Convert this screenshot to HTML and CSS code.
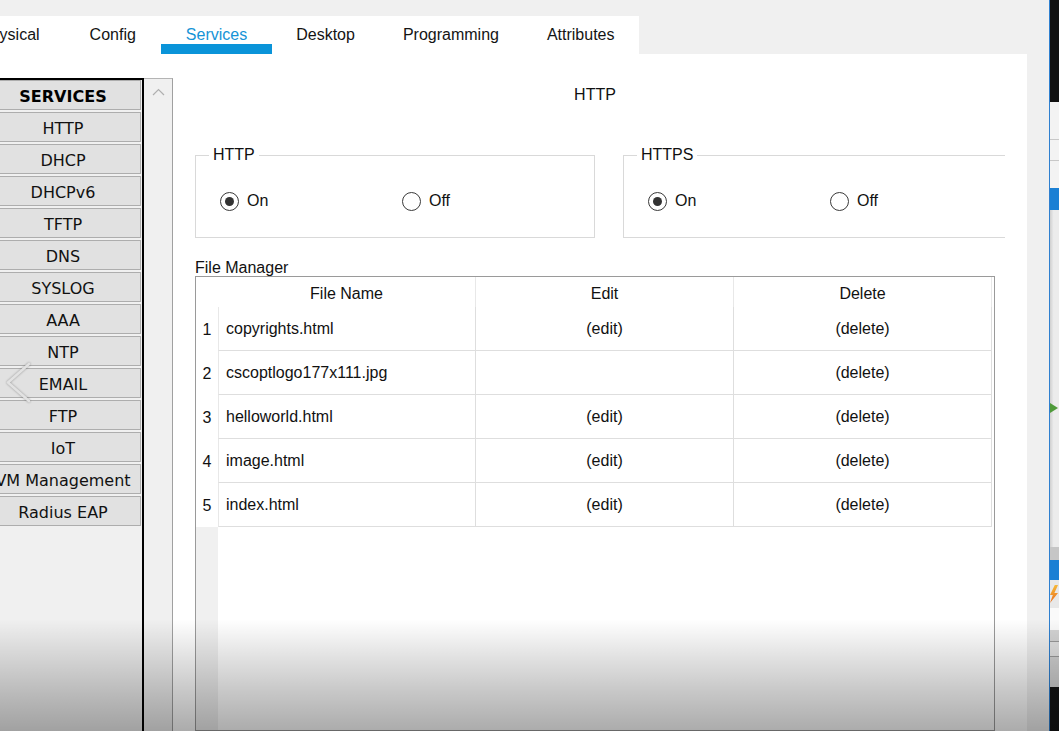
FILE: index.html
```html
<!DOCTYPE html>
<html lang="en">
<head>
<meta charset="utf-8">
<title>Services - HTTP</title>
<link rel="stylesheet" href="styles.css">
</head>
<body>
<div class="screen">
  <div class="window">
    <nav class="tabs">
      <div class="tab">Physical</div>
      <div class="tab">Config</div>
      <div class="tab active">Services</div>
      <div class="tab">Desktop</div>
      <div class="tab">Programming</div>
      <div class="tab">Attributes</div>
    </nav>
    <div class="panel">
      <div class="side">
        <div class="side-list">
          <div class="svc head">SERVICES</div>
          <div class="svc">HTTP</div>
          <div class="svc">DHCP</div>
          <div class="svc">DHCPv6</div>
          <div class="svc">TFTP</div>
          <div class="svc">DNS</div>
          <div class="svc">SYSLOG</div>
          <div class="svc">AAA</div>
          <div class="svc">NTP</div>
          <div class="svc">EMAIL</div>
          <div class="svc">FTP</div>
          <div class="svc">IoT</div>
          <div class="svc">VM Management</div>
          <div class="svc">Radius EAP</div>
        </div>
        <div class="side-scroll">
          <svg class="up" width="13" height="8" viewBox="0 0 13 8"><polyline points="1,7 6.5,1.5 12,7" fill="none" stroke="#b0b0b0" stroke-width="1.2"/></svg>
        </div>
      </div>
      <div class="content">
        <div class="title">HTTP</div>
        <div class="groups">
          <fieldset class="group">
            <legend>HTTP</legend>
            <div class="opts">
              <label class="opt"><span class="radio on"></span>On</label>
              <label class="opt"><span class="radio"></span>Off</label>
            </div>
          </fieldset>
          <fieldset class="group">
            <legend>HTTPS</legend>
            <div class="opts">
              <label class="opt"><span class="radio on"></span>On</label>
              <label class="opt"><span class="radio"></span>Off</label>
            </div>
          </fieldset>
        </div>
        <div class="fm-label">File Manager</div>
        <div class="fm-box">
          <div class="rowhdr">
            <div class="corner"></div>
            <div class="num">1</div>
            <div class="num">2</div>
            <div class="num">3</div>
            <div class="num">4</div>
            <div class="num">5</div>
          </div>
          <div class="grid">
            <div class="hdr">
              <div class="c">File Name</div>
              <div class="c">Edit</div>
              <div class="c">Delete</div>
            </div>
            <div class="row"><div class="c name">copyrights.html</div><div class="c">(edit)</div><div class="c">(delete)</div></div>
            <div class="row"><div class="c name">cscoptlogo177x111.jpg</div><div class="c"></div><div class="c">(delete)</div></div>
            <div class="row"><div class="c name">helloworld.html</div><div class="c">(edit)</div><div class="c">(delete)</div></div>
            <div class="row"><div class="c name">image.html</div><div class="c">(edit)</div><div class="c">(delete)</div></div>
            <div class="row"><div class="c name">index.html</div><div class="c">(edit)</div><div class="c">(delete)</div></div>
          </div>
        </div>
      </div>
    </div>
  </div>
  <div class="other">
    <div class="o-black top"></div>
    <div class="o-light"><div class="o-line a"></div><div class="o-line b"></div></div>
    <div class="o-blue first"></div>
    <div class="o-gray"><div class="o-arrow"></div></div>
    <div class="o-band"></div>
    <div class="o-blue second"></div>
    <div class="o-icon"><div class="bolt"></div></div>
    <div class="o-white"></div>
    <div class="o-rows"></div>
    <div class="o-black bottom"></div>
  </div>
  <svg class="prev" width="30" height="44" viewBox="0 0 30 44"><polyline points="26,3 5,21.5 26,40" fill="none" stroke="#e2e2e2" stroke-width="2.6" stroke-linecap="round" stroke-linejoin="round"/></svg>
  <div class="shade"></div>
</div>
</body>
</html>
```
FILE: styles.css
```css
html, body {
  margin: 0;
  height: 100%;
}
body {
  background: #f0f0f0;
  overflow: hidden;
  font-family: "Liberation Sans", Arial, sans-serif;
  font-size: 16px;
  color: #000;
}
.screen {
  position: relative;
  display: flex;
  width: 1059px;
  height: 731px;
  overflow: hidden;
}
.window {
  width: 1049px;
  flex: 0 0 1049px;
  display: flex;
  flex-direction: column;
  padding-top: 16px;
  box-sizing: border-box;
  overflow: hidden;
}
.tabs {
  display: flex;
  align-self: flex-start;
  background: #fff;
  margin-left: -45px;
  height: 38px;
  box-sizing: border-box;
}
.tab {
  padding: 10px 25px 0;
  line-height: 18px;
  border-bottom: 10px solid transparent;
  white-space: nowrap;
  color: #141414;
}
.tab:nth-child(n+4) {
  padding: 10px 24px 0;
}
.tab.active {
  color: #1593d6;
  border-bottom-color: #0a94d9;
}
.panel {
  width: 1027px;
  flex: 1;
  min-height: 0;
  background: #fff;
  display: flex;
}
.side {
  display: flex;
  margin-top: 24px;
}
.side-list {
  width: 142px;
  background: #f0f0f0;
  border-top: 2px solid #000;
  border-right: 2px solid #000;
  overflow: hidden;
  font-family: "DejaVu Sans", Verdana, sans-serif;
}
.svc {
  width: 156px;
  height: 30px;
  margin: 0 0 2px -15px;
  padding-top: 2px;
  box-sizing: border-box;
  border: 1px solid #adadad;
  background: #e1e1e1;
  text-align: center;
  line-height: 28px;
  white-space: nowrap;
  color: #111;
}
.svc.head {
  font-weight: bold;
  color: #000;
}
.side-scroll {
  width: 28px;
  background: #f0f0f0;
  border-top: 1px solid #b4b4b4;
  border-right: 1px solid #a0a0a0;
  display: flex;
  justify-content: center;
  align-items: flex-start;
}
.up {
  margin-top: 9px;
}
.content {
  margin-left: 22px;
  width: 810px;
  overflow: hidden;
  padding-top: 31px;
  display: flex;
  flex-direction: column;
}
.title {
  text-align: center;
  line-height: 20px;
  padding-right: 10px;
  color: #111;
}
.groups {
  display: flex;
  gap: 28px;
  margin-top: 40px;
}
.group {
  flex: 0 0 400px;
  box-sizing: border-box;
  border: 1px solid #d9d9d9;
  margin: 0;
  padding: 0;
  min-width: 0;
}
.group legend {
  margin-left: 13px;
  padding: 0 4px;
  line-height: 20px;
  color: #111;
}
.opts {
  display: grid;
  grid-template-columns: 182px 182px;
  padding: 26px 0 26px 24px;
}
.opt {
  display: flex;
  align-items: center;
  gap: 8px;
  line-height: 20px;
  color: #111;
}
.radio {
  width: 19px;
  height: 19px;
  box-sizing: border-box;
  border: 1px solid #3a3a3a;
  border-radius: 50%;
  background: #fff;
  display: flex;
  align-items: center;
  justify-content: center;
}
.radio.on::after {
  content: "";
  width: 9px;
  height: 9px;
  border-radius: 50%;
  background: #333;
}
.fm-label {
  margin-top: 20px;
  line-height: 20px;
  color: #111;
}
.fm-box {
  width: 800px;
  flex: 1;
  margin-top: -2px;
  box-sizing: border-box;
  border: 1px solid #9a9a9a;
  background: #fff;
  display: flex;
  align-items: flex-start;
}
.rowhdr {
  width: 22px;
  align-self: stretch;
  background: #f0f0f0;
  display: flex;
  flex-direction: column;
}
.rowhdr .corner {
  height: 30px;
  background: #fff;
}
.rowhdr .num {
  height: 44px;
  background: #fff;
  display: flex;
  align-items: center;
  justify-content: center;
  padding-top: 1px;
  box-sizing: border-box;
  color: #111;
}
.grid {
  width: 774px;
}
.hdr {
  display: flex;
  height: 30px;
}
.hdr .c {
  width: 258px;
  box-sizing: border-box;
  text-align: center;
  line-height: 34px;
  border-right: 1px solid #e8e8e8;
  color: #111;
}
.row {
  display: flex;
  height: 44px;
}
.row .c {
  width: 258px;
  box-sizing: border-box;
  text-align: center;
  line-height: 43px;
  border-right: 1px solid #dedede;
  border-bottom: 1px solid #dedede;
  color: #111;
}
.row .c.name {
  text-align: left;
  padding-left: 7px;
  border-left: 1px solid #e8e8e8;
  width: 258px;
}
.other {
  width: 10px;
  flex: 0 0 10px;
  box-sizing: border-box;
  border-left: 1px solid #2f80d0;
  display: flex;
  flex-direction: column;
  background: #e6e6e6;
}
.o-black.top { height: 102px; background: #111; }
.o-light {
  height: 86px;
  background: #f3f3f3;
  display: flex;
  flex-direction: column;
}
.o-line { border-top: 1px solid #c8c8c8; }
.o-line.a { margin-top: 37px; }
.o-line.b { margin-top: 20px; }
.o-blue { background: #1b80d4; }
.o-blue.first { height: 22px; }
.o-gray {
  height: 337px;
  background: linear-gradient(to right, #cfcfcf, #ececec 40%);
  display: flex;
  flex-direction: column;
}
.o-arrow {
  margin-top: 193px;
  width: 0;
  height: 0;
  border-left: 8px solid #4f9a3a;
  border-top: 5px solid transparent;
  border-bottom: 5px solid transparent;
}
.o-band { height: 13px; background: #c6c6c6; }
.o-blue.second { height: 20px; }
.o-icon {
  height: 28px;
  background: #e8e8e8;
  display: flex;
  align-items: center;
}
.bolt {
  width: 8px;
  height: 18px;
  background: linear-gradient(160deg, #f7c23b, #e8641b);
  clip-path: polygon(60% 0, 100% 0, 55% 45%, 100% 45%, 0 100%, 35% 55%, 0 55%);
}
.o-white { height: 22px; background: #fafafa; }
.o-rows {
  height: 57px;
  background: linear-gradient(#d4d4d4 0 11px, #999 11px 12px, #e2e2e2 12px 26px, #999 26px 27px, #d2d2d2 27px);
}
.o-black.bottom { flex: 1; background: #151515; }
.prev {
  position: absolute;
  left: 3px;
  top: 361px;
  filter: drop-shadow(0 0 1px rgba(0, 0, 0, 0.35));
}
.shade {
  position: absolute;
  left: 0;
  right: 0;
  bottom: 0;
  height: 112px;
  pointer-events: none;
  background: linear-gradient(to bottom, rgba(0, 0, 0, 0) 0%, rgba(0, 0, 0, 0.1) 30%, rgba(0, 0, 0, 0.22) 65%, rgba(0, 0, 0, 0.33) 100%);
}
```
